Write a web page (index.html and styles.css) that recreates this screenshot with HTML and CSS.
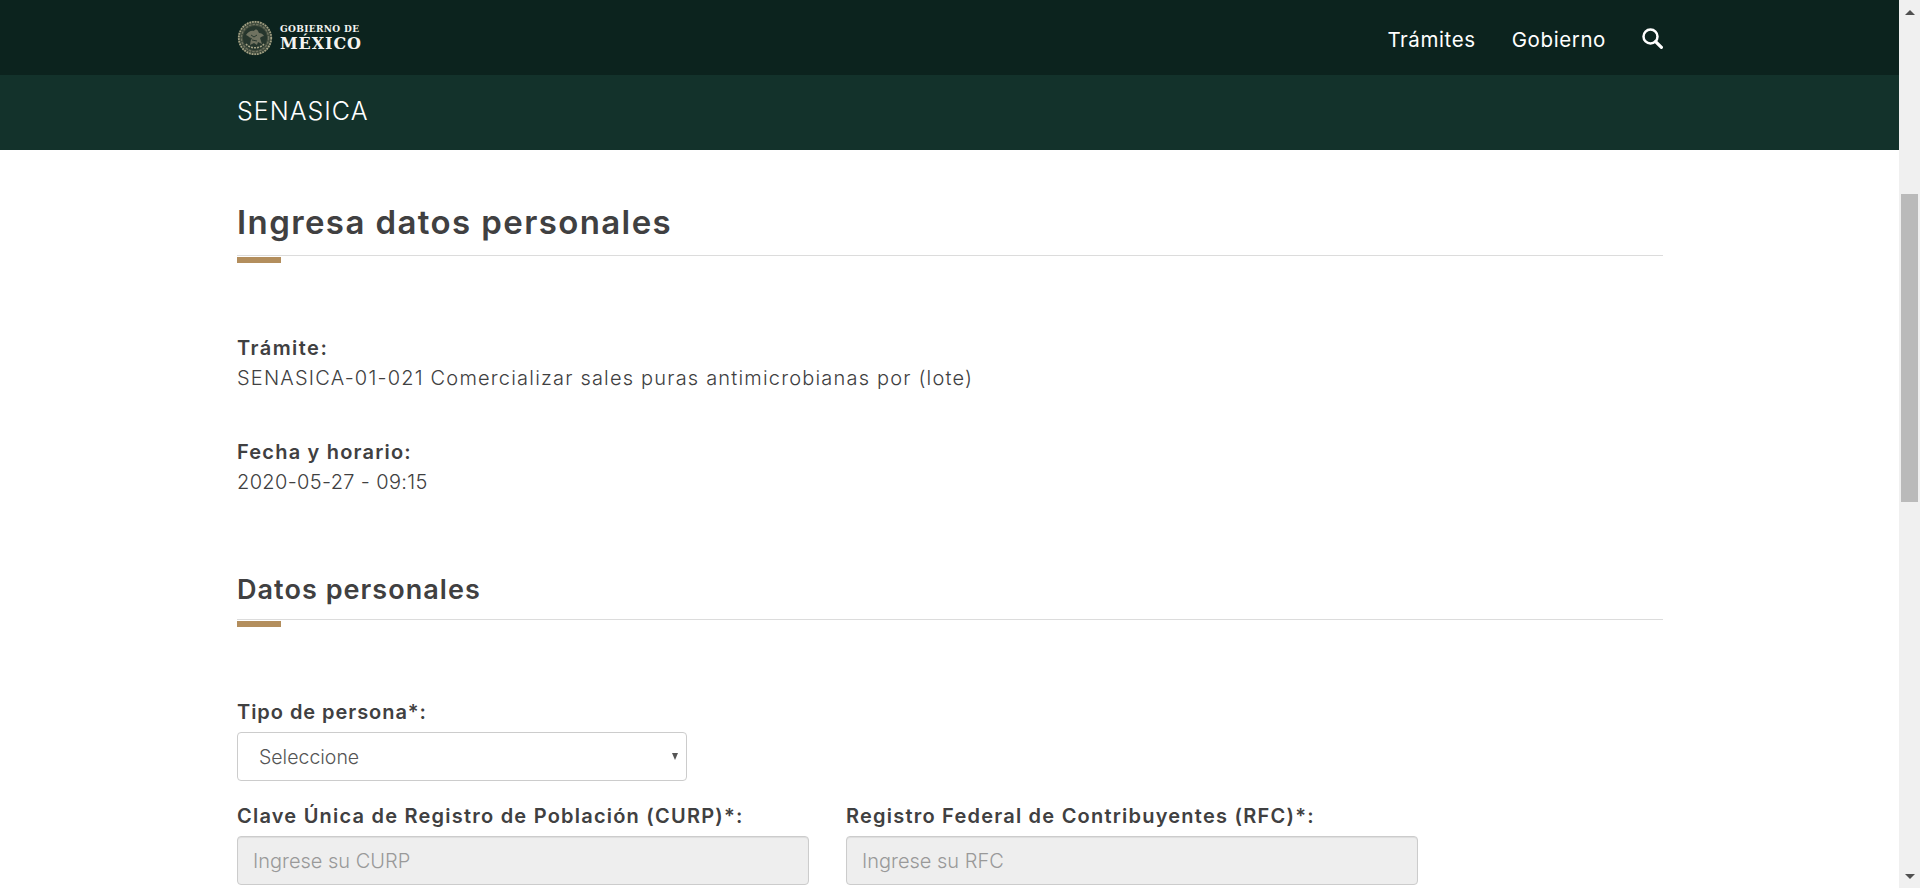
FILE: index.html
```html
<!DOCTYPE html>
<html lang="es">
<head>
    <meta charset="UTF-8">
    <title>Ingresa datos personales - SENASICA</title>
    <link rel="stylesheet" href="styles.css">
</head>
<body>
    <div class="page">
        <header>
            <div class="top-bar">
                <div class="wrap top-inner">
                    <a class="logo" href="#">
                        <svg class="emblem" width="36" height="36" viewBox="0 0 36 36">
                            <circle cx="18" cy="18" r="17.2" fill="#3f4a3c"/>
                            <circle cx="18" cy="18" r="16.2" fill="none" stroke="#a5a386" stroke-width="1.8" stroke-dasharray="1.6 1.1"/>
                            <circle cx="18" cy="18" r="13.6" fill="none" stroke="#6f7360" stroke-width="1.4" stroke-dasharray="2.4 1.2"/>
                            <circle cx="18" cy="18" r="12" fill="#26362d"/>
                            <path d="M9 15c2-3 5-5 8-4 1-2 3-2 4 0l1 2c2 0 4 1 5 3-2 0-3 1-4 2l2 6-4-2-1 3-3-2-4 2 1-6c-1-2-3-3-5-4z" fill="#6f7260"/>
                            <path d="M14 15l3 2 3-2M15 20l5 1M13 18l2 1" fill="none" stroke="#2a3a31" stroke-width="1"/>
                            <path d="M9 24c4 5 14 5 18 0" fill="none" stroke="#a5a386" stroke-width="1.6" stroke-dasharray="2 1"/>
                        </svg>
                        <span class="logo-text">
                            <span class="logo-small">GOBIERNO DE</span>
                            <span class="logo-big">MÉXICO</span>
                        </span>
                    </a>
                    <nav class="main-nav">
                        <a href="#">Trámites</a>
                        <a href="#">Gobierno</a>
                        <a href="#" class="search-link" aria-label="Buscar">
                            <svg width="21" height="21" viewBox="0 0 21 21">
                                <circle cx="8.5" cy="8.5" r="7" fill="none" stroke="#fff" stroke-width="2.5"/>
                                <path d="M13.6 13.6L19.4 19.4" stroke="#fff" stroke-width="3.2" stroke-linecap="round"/>
                            </svg>
                        </a>
                    </nav>
                </div>
            </div>
            <div class="sub-bar">
                <div class="wrap">SENASICA</div>
            </div>
        </header>

        <main class="wrap">
            <h1 class="title">Ingresa datos personales</h1>
            <hr class="red">

            <div class="info first">
                <strong>Trámite:</strong>
                <span>SENASICA-01-021 Comercializar sales puras antimicrobianas por (lote)</span>
            </div>
            <div class="info">
                <strong>Fecha y horario:</strong>
                <span class="date">2020-05-27 - 09:15</span>
            </div>

            <h2 class="title section">Datos personales</h2>
            <hr class="red red-section">

            <form>
                <div class="field field-select">
                    <label for="tipo">Tipo de persona*:</label>
                    <div class="select-box" id="tipo">
                        <span>Seleccione</span>
                        <i class="caret"></i>
                    </div>
                </div>
                <div class="row">
                    <div class="field field-curp">
                        <label for="curp">Clave Única de Registro de Población (CURP)*:</label>
                        <input type="text" id="curp" placeholder="Ingrese su CURP" disabled>
                    </div>
                    <div class="field field-rfc">
                        <label for="rfc">Registro Federal de Contribuyentes (RFC)*:</label>
                        <input type="text" id="rfc" placeholder="Ingrese su RFC" disabled>
                    </div>
                </div>
            </form>
        </main>
    </div>

    <div class="scrollbar">
        <div class="arrow"></div>
        <div class="track"><div class="thumb"></div></div>
        <div class="arrow down"></div>
    </div>
</body>
</html>
```

FILE: styles.css
```css
* {
    box-sizing: border-box;
}

html, body {
    height: 100%;
}

body {
    margin: 0;
    display: flex;
    overflow: hidden;
    background: #fff;
    color: #404041;
    font-family: Inter, "Open Sans", Arial, sans-serif;
    font-size: 20px;
}

a {
    color: #fff;
    text-decoration: none;
}

.page {
    flex: 1;
    min-width: 0;
    height: 888px;
    overflow: hidden;
}

.wrap {
    width: 1426px;
    margin-left: 237px;
}

/* header */
.top-bar {
    height: 75px;
    background: #0c231e;
}

.top-inner {
    height: 75px;
    display: flex;
    justify-content: space-between;
}

.logo {
    display: flex;
    align-items: center;
    gap: 7px;
    height: 75px;
}

.logo-text {
    display: flex;
    flex-direction: column;
    font-family: "DejaVu Serif", "Liberation Serif", serif;
    font-weight: bold;
    color: #f4f4f0;
}

.logo-small {
    font-size: 9px;
    line-height: 11px;
    letter-spacing: 0.35px;
}

.logo-big {
    font-size: 16px;
    line-height: 17px;
    letter-spacing: 0.9px;
}

.main-nav {
    display: flex;
    align-items: flex-start;
    gap: 36px;
    padding-top: 27px;
    font-size: 20.5px;
    font-weight: 400;
    line-height: 26px;
    letter-spacing: 0.6px;
}

.search-link {
    display: block;
    margin-top: 1px;
}

.search-link svg {
    display: block;
}

.sub-bar {
    height: 75px;
    background: #13322b;
    color: #fff;
    font-size: 25px;
    font-weight: 300;
    line-height: 72px;
    letter-spacing: 1px;
}

/* headings */
.title {
    margin: 0;
    font-weight: 600;
    color: #404041;
}

h1.title {
    padding-top: 50px;
    font-size: 33px;
    line-height: 45px;
    letter-spacing: 1.4px;
}

h2.title {
    font-size: 27px;
    line-height: 36px;
    letter-spacing: 1.05px;
}

.section {
    padding-top: 75px;
}

hr.red {
    position: relative;
    overflow: visible;
    height: 1px;
    margin: 10px 0 0;
    border: 0;
    background: #dcdcdc;
}

hr.red-section {
    margin-top: 11px;
}

hr.red::after {
    content: "";
    position: absolute;
    left: 0;
    top: 2px;
    width: 44px;
    height: 6px;
    background: #b38e5d;
}

/* tramite data */
.info {
    display: flex;
    flex-direction: column;
    margin-top: 44px;
    line-height: 30px;
}

.info.first {
    margin-top: 77px;
}

.info strong {
    font-weight: 600;
    letter-spacing: 1.2px;
}

.info.first strong {
    letter-spacing: 1.45px;
}

.info span {
    font-weight: 300;
    letter-spacing: 1.19px;
}

.info span.date {
    letter-spacing: 0.35px;
}

/* form */
form {
    margin-top: 80px;
}

.field label {
    display: block;
    font-weight: 600;
    line-height: 24px;
    margin-bottom: 8px;
    letter-spacing: 1.22px;
}

.field-select {
    width: 450px;
}

.field-select label {
    letter-spacing: 0.95px;
}

.select-box {
    display: flex;
    align-items: center;
    justify-content: space-between;
    height: 49px;
    padding: 0 8px 0 21px;
    background: #fff;
    border: 1px solid #ccc;
    border-radius: 4px;
    font-size: 19.5px;
    font-weight: 300;
    color: #555;
}

.caret {
    width: 0;
    height: 0;
    border-left: 3.5px solid transparent;
    border-right: 3.5px solid transparent;
    border-top: 7px solid #555;
}

.row {
    display: flex;
    margin-top: 23px;
}

.field-curp {
    width: 572px;
    margin-right: 37px;
}

.field-rfc {
    width: 572px;
}

.field input {
    display: block;
    width: 100%;
    height: 49px;
    padding: 0 15px;
    border: 1px solid #ccc;
    border-radius: 4px;
    background: #eee;
    font-family: inherit;
    font-size: 20px;
    font-weight: 300;
    box-shadow: inset 0 1px 1px rgba(0, 0, 0, 0.075);
}

.field input::placeholder {
    color: #999;
    opacity: 1;
}

/* browser scrollbar from the screenshot */
.scrollbar {
    flex: none;
    display: flex;
    flex-direction: column;
    width: 21px;
    height: 888px;
    background: #f0f0f0;
}

.arrow {
    flex: none;
    height: 21px;
    padding-top: 10px;
}

.arrow::before {
    content: "";
    display: block;
    width: 0;
    margin: 0 auto;
    border-left: 5px solid transparent;
    border-right: 5px solid transparent;
    border-bottom: 5px solid #505050;
}

.arrow.down {
    padding-top: 7px;
}

.arrow.down::before {
    border-bottom: 0;
    border-top: 5px solid #505050;
}

.track {
    flex: 1;
    padding: 173px 2px 0;
}

.thumb {
    height: 308px;
    background: #bababa;
}
```
